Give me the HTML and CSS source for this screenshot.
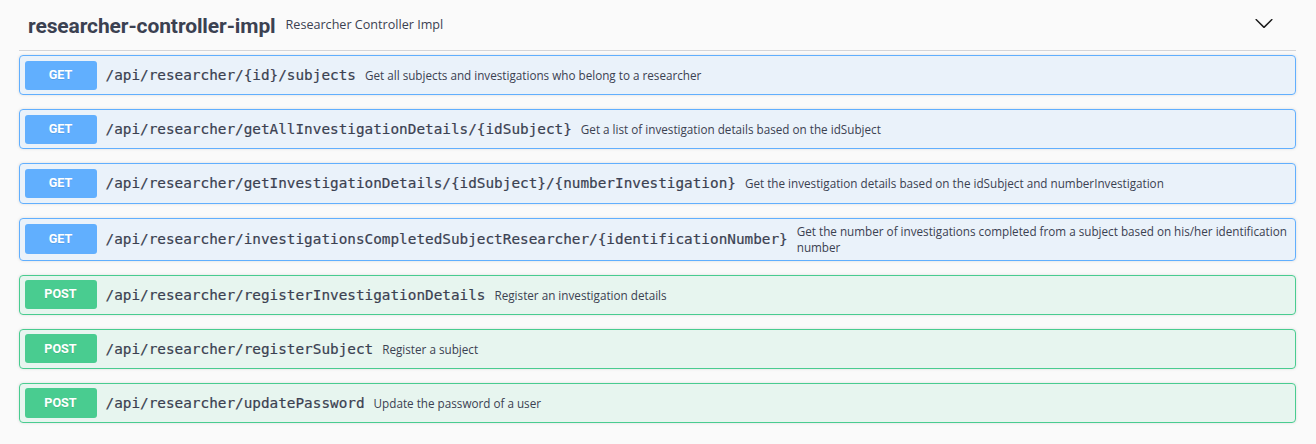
FILE: index.html
```html
<!DOCTYPE html>
<html lang="en">
<head>
<meta charset="utf-8">
<title>researcher-controller-impl</title>
<link rel="stylesheet" href="styles.css">
</head>
<body>
<div class="section">
  <h4 class="tag">
    <span class="tag-name">researcher-controller-impl</span>
    <small class="tag-desc">Researcher Controller Impl</small>
    <button class="expand" type="button" aria-label="Collapse">
      <svg width="20" height="20" viewBox="0 0 20 20"><path fill="#1a1a1a" d="M17.418 6.109c.272-.268.709-.268.979 0s.271.701 0 .969l-7.908 7.83c-.27.268-.707.268-.979 0l-7.908-7.83c-.27-.268-.27-.701 0-.969.271-.268.709-.268.979 0L10 13.25l7.418-7.141z"/></svg>
    </button>
  </h4>
  <div class="ops">
    <div class="op get">
      <div class="summary"><span class="method">GET</span><span class="path">/api/researcher/{id}/subjects</span><div class="desc">Get all subjects and investigations who belong to a researcher</div></div>
    </div>
    <div class="op get">
      <div class="summary"><span class="method">GET</span><span class="path">/api/researcher/getAllInvestigationDetails/{idSubject}</span><div class="desc">Get a list of investigation details based on the idSubject</div></div>
    </div>
    <div class="op get">
      <div class="summary"><span class="method">GET</span><span class="path">/api/researcher/getInvestigationDetails/{idSubject}/{numberInvestigation}</span><div class="desc">Get the investigation details based on the idSubject and numberInvestigation</div></div>
    </div>
    <div class="op get">
      <div class="summary"><span class="method">GET</span><span class="path">/api/researcher/investigationsCompletedSubjectResearcher/{identificationNumber}</span><div class="desc">Get the number of investigations completed from a subject based on his/her identification number</div></div>
    </div>
    <div class="op post">
      <div class="summary"><span class="method">POST</span><span class="path">/api/researcher/registerInvestigationDetails</span><div class="desc">Register an investigation details</div></div>
    </div>
    <div class="op post">
      <div class="summary"><span class="method">POST</span><span class="path">/api/researcher/registerSubject</span><div class="desc">Register a subject</div></div>
    </div>
    <div class="op post">
      <div class="summary"><span class="method">POST</span><span class="path">/api/researcher/updatePassword</span><div class="desc">Update the password of a user</div></div>
    </div>
  </div>
</div>
</body>
</html>
```
FILE: styles.css
```css
html, body {
  margin: 0;
  padding: 0;
  background: #fafafa;
}

body {
  font-family: "Open Sans", "Noto Sans", sans-serif;
  color: #3b4151;
}

.section {
  padding: 0 20px 0 19px;
}

.tag {
  display: flex;
  align-items: center;
  margin: 0 0 4px;
  padding: 9px 18px 9px 9px;
  height: 32px;
  border-bottom: 1px solid rgba(59, 65, 81, 0.2);
  font-weight: normal;
}

.tag-name {
  font-family: Roboto, "Open Sans", sans-serif;
  font-weight: 700;
  font-size: 21px;
  letter-spacing: -0.1px;
  color: #3b4151;
  line-height: 32px;
  padding-top: 2px;
}

.tag-desc {
  flex: 1;
  padding: 0 10px;
  font-family: "Open Sans", sans-serif;
  font-size: 12.6px;
  color: #3b4151;
  margin-top: -2px;
}

.expand {
  display: flex;
  border: 0;
  background: none;
  padding: 0 4px 0 0;
  margin-top: -4px;
  cursor: pointer;
}

.op {
  margin: 0 0 14px;
  border: 1px solid;
  border-radius: 4px;
  box-shadow: 0 0 3px rgba(0, 0, 0, 0.12);
}

.op.get {
  border-color: #61affe;
  background: rgba(97, 175, 254, 0.1);
}

.op.post {
  border-color: #49cc90;
  background: rgba(73, 204, 144, 0.1);
}

.summary {
  display: flex;
  align-items: center;
  padding: 4.5px;
}

.method {
  flex: none;
  box-sizing: border-box;
  min-width: 72px;
  padding: 5.4px 13.5px;
  border-radius: 3px;
  text-align: center;
  font-family: Roboto, "Open Sans", sans-serif;
  font-weight: 700;
  font-size: 12.6px;
  line-height: 18.4px;
  color: #fff;
  text-shadow: 0 1px 0 rgba(0, 0, 0, 0.1);
}

.get .method {
  background: #61affe;
}

.post .method {
  background: #49cc90;
}

.path {
  flex: none;
  padding: 0 9px;
  font-family: "DejaVu Sans Mono", "Liberation Mono", monospace;
  font-size: 14.35px;
  color: #3b4151;
  -webkit-text-stroke: 0.2px #3b4151;
}

.desc {
  flex: 1 1 auto;
  font-family: "Open Sans", sans-serif;
  font-size: 11.7px;
  color: #3b4151;
}
```
